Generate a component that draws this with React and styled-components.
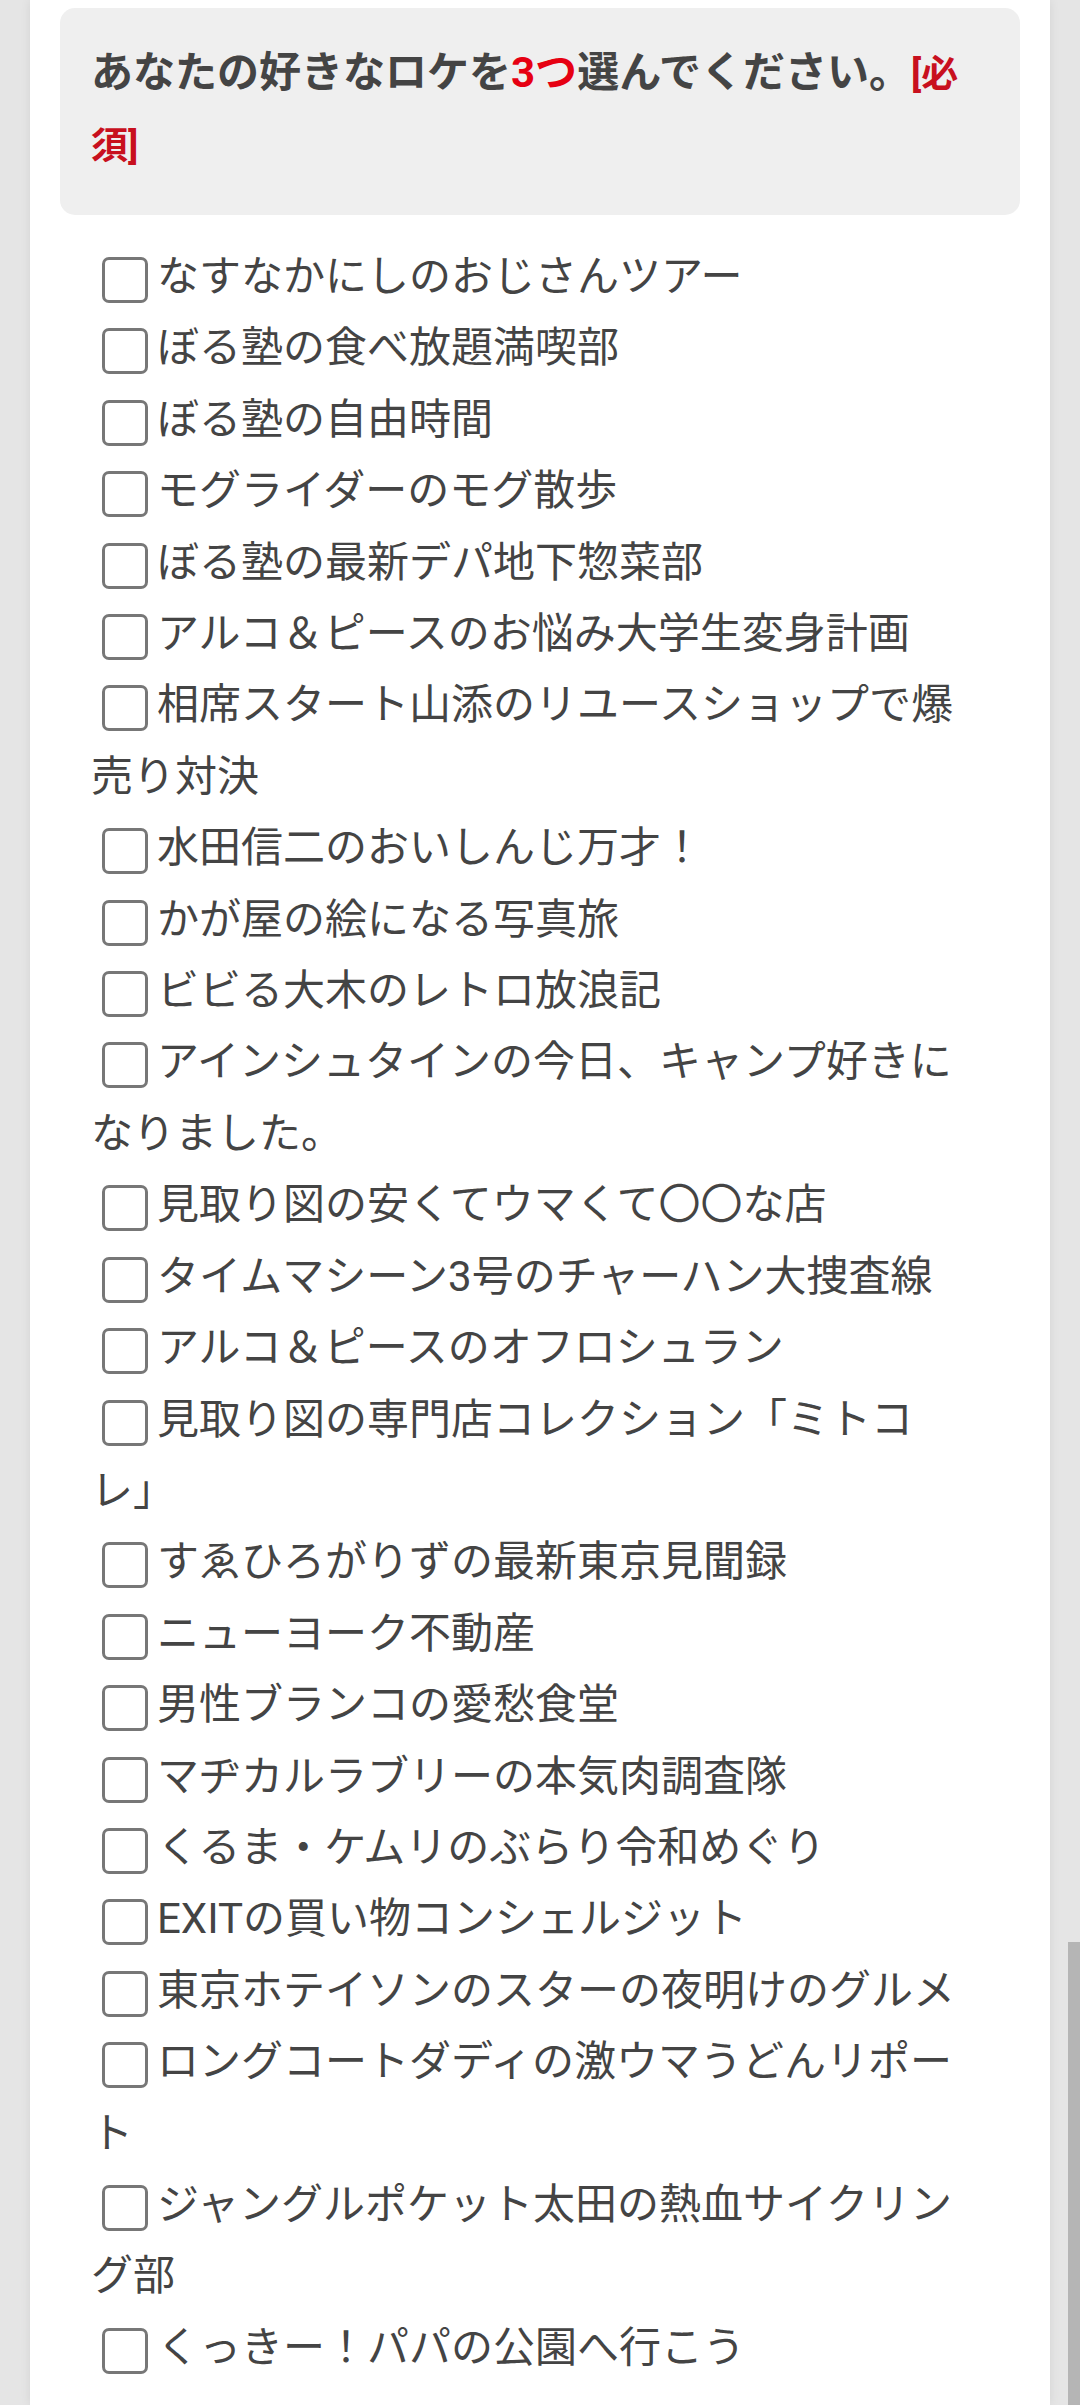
import React from "react";
import styled, { createGlobalStyle } from "styled-components";

const Global = createGlobalStyle`
  html, body {
    margin: 0;
    padding: 0;
    background: #e5e5e5;
  }
  body {
    font-family: Roboto, "Noto Sans CJK JP", sans-serif;
    color: #444;
  }
  * { box-sizing: border-box; }
`;

const Page = styled.div`
  min-height: 2405px;
  padding: 0 30px;
  overflow: hidden;
`;

const Card = styled.main`
  background: #fff;
  min-height: 2405px;
  padding: 8px 30px 0;
  box-shadow: 0 0 10px rgba(0, 0, 0, 0.08);
`;

const QuestionBox = styled.div`
  background: #efefef;
  border-radius: 15px;
  padding: 29px 31px 34px;
`;

const Question = styled.h2`
  margin: 0;
  font-size: 42px;
  font-weight: 700;
  line-height: 72px;
  color: #444;
`;

const Accent = styled.span`
  color: #e60012;
`;

const Required = styled.span`
  color: #c8101e;
  font-size: 37px;
  line-height: 1;
`;

const List = styled.div`
  margin-top: 26px;
  padding: 0 31px;
`;

const Item = styled.label`
  display: block;
  font-size: 42px;
  line-height: 71.4px;
  color: #444;
  cursor: pointer;
`;

const Box = styled.input.attrs({ type: "checkbox" })`
  appearance: none;
  -webkit-appearance: none;
  display: inline-block;
  width: 46px;
  height: 46px;
  margin: 0 9px 0 11px;
  border: 3px solid #777;
  border-radius: 7px;
  background: #fff;
  vertical-align: -12px;
`;

const ScrollThumb = styled.div`
  position: fixed;
  right: 0;
  top: 1942px;
  width: 12px;
  height: 463px;
  background: #b5b5b5;
`;

const items = [
  "なすなかにしのおじさんツアー",
  "ぼる塾の食べ放題満喫部",
  "ぼる塾の自由時間",
  "モグライダーのモグ散歩",
  "ぼる塾の最新デパ地下惣菜部",
  "アルコ＆ピースのお悩み大学生変身計画",
  "相席スタート山添のリユースショップで爆売り対決",
  "水田信二のおいしんじ万才！",
  "かが屋の絵になる写真旅",
  "ビビる大木のレトロ放浪記",
  "アインシュタインの今日、キャンプ好きになりました。",
  "見取り図の安くてウマくて〇〇な店",
  "タイムマシーン3号のチャーハン大捜査線",
  "アルコ＆ピースのオフロシュラン",
  "見取り図の専門店コレクション「ミトコ|レ」",
  "すゑひろがりずの最新東京見聞録",
  "ニューヨーク不動産",
  "男性ブランコの愛愁食堂",
  "マヂカルラブリーの本気肉調査隊",
  "くるま・ケムリのぶらり令和めぐり",
  "EXITの買い物コンシェルジット",
  "東京ホテイソンのスターの夜明けのグルメ",
  "ロングコートダディの激ウマうどんリポート",
  "ジャングルポケット太田の熱血サイクリング部",
  "くっきー！パパの公園へ行こう",
];

function Label({ text }) {
  const parts = text.split("|");
  return parts.map((p, i) => (
    <React.Fragment key={i}>
      {i > 0 && <wbr />}
      {p}
    </React.Fragment>
  ));
}

export default function App() {
  return (
    <>
      <Global />
      <Page>
        <Card>
          <QuestionBox>
            <Question>
              あなたの好きなロケを<Accent>3つ</Accent>選んでください。
              <Required>[必須]</Required>
            </Question>
          </QuestionBox>
          <List>
            {items.map((t) => (
              <Item key={t}>
                <Box />
                <Label text={t} />
              </Item>
            ))}
          </List>
        </Card>
      </Page>
      <ScrollThumb />
    </>
  );
}
